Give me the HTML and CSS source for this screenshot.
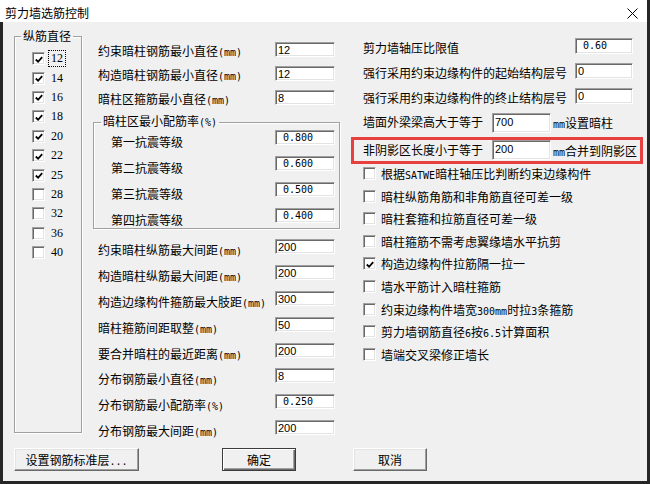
FILE: index.html
```html
<!DOCTYPE html>
<html lang="zh-CN">
<head>
    <meta charset="UTF-8" />
    <title>剪力墙选筋控制</title>
    <link rel="stylesheet" href="styles.css">
</head>
<body>

<div class="window">
    <div class="titlebar">
        <span class="title">剪力墙选筋控制</span>
        <span class="close">
            <svg width="11" height="11" viewBox="0 0 11 11"><path d="M0.5 0.5L10.5 10.5M10.5 0.5L0.5 10.5" stroke="#000" stroke-width="1" fill="none"/></svg>
        </span>
    </div>

    <div class="client">
        <div class="panels">

            <fieldset class="group bars">
                <legend>纵筋直径</legend>
                <div class="bar-list">
                    <div class="bar-row"><span class="box on"><svg width="11" height="11" viewBox="0 0 11 11"><path d="M2 5.5L4.5 8L9 3" stroke="#000" stroke-width="2" fill="none"/></svg></span><span class="dia focus">12</span></div>
                    <div class="bar-row"><span class="box on"><svg width="11" height="11" viewBox="0 0 11 11"><path d="M2 5.5L4.5 8L9 3" stroke="#000" stroke-width="2" fill="none"/></svg></span><span class="dia">14</span></div>
                    <div class="bar-row"><span class="box on"><svg width="11" height="11" viewBox="0 0 11 11"><path d="M2 5.5L4.5 8L9 3" stroke="#000" stroke-width="2" fill="none"/></svg></span><span class="dia">16</span></div>
                    <div class="bar-row"><span class="box on"><svg width="11" height="11" viewBox="0 0 11 11"><path d="M2 5.5L4.5 8L9 3" stroke="#000" stroke-width="2" fill="none"/></svg></span><span class="dia">18</span></div>
                    <div class="bar-row"><span class="box on"><svg width="11" height="11" viewBox="0 0 11 11"><path d="M2 5.5L4.5 8L9 3" stroke="#000" stroke-width="2" fill="none"/></svg></span><span class="dia">20</span></div>
                    <div class="bar-row"><span class="box on"><svg width="11" height="11" viewBox="0 0 11 11"><path d="M2 5.5L4.5 8L9 3" stroke="#000" stroke-width="2" fill="none"/></svg></span><span class="dia">22</span></div>
                    <div class="bar-row"><span class="box on"><svg width="11" height="11" viewBox="0 0 11 11"><path d="M2 5.5L4.5 8L9 3" stroke="#000" stroke-width="2" fill="none"/></svg></span><span class="dia">25</span></div>
                    <div class="bar-row"><span class="box"></span><span class="dia">28</span></div>
                    <div class="bar-row"><span class="box"></span><span class="dia">32</span></div>
                    <div class="bar-row"><span class="box"></span><span class="dia">36</span></div>
                    <div class="bar-row"><span class="box"></span><span class="dia">40</span></div>
                </div>
            </fieldset>

            <div class="col mid">
                <div class="field top"><label>约束暗柱钢筋最小直径<span class="n">(mm)</span></label><span class="edit">12</span></div>
                <div class="field top"><label>构造暗柱钢筋最小直径<span class="n">(mm)</span></label><span class="edit">12</span></div>
                <div class="field top"><label>暗柱区箍筋最小直径<span class="n">(mm)</span></label><span class="edit">8</span></div>

                <fieldset class="group ratio">
                    <legend>暗柱区最小配筋率<span class="n">(%)</span></legend>
                    <div class="ratio-list">
                        <div class="grade"><label>第一抗震等级</label><span class="edit dec">0.800</span></div>
                        <div class="grade"><label>第二抗震等级</label><span class="edit dec">0.600</span></div>
                        <div class="grade"><label>第三抗震等级</label><span class="edit dec">0.500</span></div>
                        <div class="grade"><label>第四抗震等级</label><span class="edit dec">0.400</span></div>
                    </div>
                </fieldset>

                <div class="lower">
                    <div class="field low"><label>约束暗柱纵筋最大间距<span class="n">(mm)</span></label><span class="edit">200</span></div>
                    <div class="field low"><label>构造暗柱纵筋最大间距<span class="n">(mm)</span></label><span class="edit">200</span></div>
                    <div class="field low"><label>构造边缘构件箍筋最大肢距<span class="n">(mm)</span></label><span class="edit">300</span></div>
                    <div class="field low"><label>暗柱箍筋间距取整<span class="n">(mm)</span></label><span class="edit">50</span></div>
                    <div class="field low"><label>要合并暗柱的最近距离<span class="n">(mm)</span></label><span class="edit">200</span></div>
                    <div class="field low"><label>分布钢筋最小直径<span class="n">(mm)</span></label><span class="edit">8</span></div>
                    <div class="field low"><label>分布钢筋最小配筋率<span class="n">(%)</span></label><span class="edit dec">0.250</span></div>
                    <div class="field low"><label>分布钢筋最大间距<span class="n">(mm)</span></label><span class="edit">200</span></div>
                </div>
            </div>

            <div class="col side">
                <div class="field wide"><label>剪力墙轴压比限值</label><span class="edit dec">0.60</span></div>
                <div class="field wide"><label>强行采用约束边缘构件的起始结构层号</label><span class="edit">0</span></div>
                <div class="field wide"><label>强行采用约束边缘构件的终止结构层号</label><span class="edit">0</span></div>
                <div class="field beam"><label>墙面外梁梁高大于等于</label><span class="edit tall">700</span><span class="unit"><span class="n">mm</span>设置暗柱</span></div>
                <div class="field alert"><label>非阴影区长度小于等于</label><span class="edit tall">200</span><span class="unit"><span class="n">mm</span>合并到阴影区</span></div>

                <div class="options">
                    <div class="opt"><span class="box"></span><span>根据<span class="n">SATWE</span>暗柱轴压比判断约束边缘构件</span></div>
                    <div class="opt"><span class="box"></span><span>暗柱纵筋角筋和非角筋直径可差一级</span></div>
                    <div class="opt"><span class="box"></span><span>暗柱套箍和拉筋直径可差一级</span></div>
                    <div class="opt"><span class="box"></span><span>暗柱箍筋不需考虑翼缘墙水平抗剪</span></div>
                    <div class="opt"><span class="box on"><svg width="11" height="11" viewBox="0 0 11 11"><path d="M2 5.5L4.5 8L9 3" stroke="#000" stroke-width="2" fill="none"/></svg></span><span>构造边缘构件拉筋隔一拉一</span></div>
                    <div class="opt"><span class="box"></span><span>墙水平筋计入暗柱箍筋</span></div>
                    <div class="opt"><span class="box"></span><span>约束边缘构件墙宽<span class="n">300mm</span>时拉<span class="n">3</span>条箍筋</span></div>
                    <div class="opt"><span class="box"></span><span>剪力墙钢筋直径<span class="n">6</span>按<span class="n">6.5</span>计算面积</span></div>
                    <div class="opt"><span class="box"></span><span>墙端交叉梁修正墙长</span></div>
                </div>
            </div>

        </div>

        <div class="buttons">
            <button class="btn std">设置钢筋标准层<span class="n">...</span></button>
            <button class="btn ok">确定</button>
            <button class="btn cancel">取消</button>
        </div>
    </div>
</div>

</body>
</html>
```

FILE: styles.css
```css
* {
    box-sizing: border-box;
}

body {
    margin: 0;
    background-color: #262626;
    font-family: "Noto Sans CJK SC", sans-serif;
    font-size: 12px;
    color: #000;
}

.window {
    width: 647px;
    height: 481px;
    background-color: #f0f0f0;
    display: flex;
    flex-direction: column;
}

/* title bar */
.titlebar {
    height: 22px;
    background-color: #fff;
    display: flex;
    justify-content: space-between;
    align-items: flex-start;
    padding: 0 9px 0 5px;
}

.title {
    margin-top: 5px;
    line-height: 15px;
}

.close {
    margin-top: 8px;
    display: flex;
}

.client {
    flex: 1;
    border-left: 3px solid #262626;
    display: flex;
    flex-direction: column;
}

.panels {
    display: flex;
    height: 426px;
}

/* group boxes */
.group {
    margin: 0;
    padding: 0;
    border: 1px solid #a0a0a0;
    box-shadow: inset 1px 1px 0 #fff, 1px 1px 0 #fff;
    min-width: 0;
}

.group legend {
    padding: 0 2px;
    line-height: 14px;
}

.n {
    font-family: "DejaVu Sans Mono", monospace;
    font-size: 10px;
}

/* bar diameters */
.bars {
    margin: 7px 0 0 11px;
    width: 68px;
    height: 404px;
}

.bars legend {
    margin-left: 6px;
}

.bar-list {
    padding: 6px 0 0 17px;
}

.bar-row {
    display: flex;
    align-items: center;
    gap: 5px;
    height: 19.4px;
}

.dia {
    font-family: "Liberation Serif", serif;
    font-size: 12px;
    line-height: 13px;
    padding: 0 1px;
}

.focus {
    outline: 1px dotted #000;
    outline-offset: 1px;
}

/* check boxes */
.box {
    width: 13px;
    height: 13px;
    flex: none;
    background-color: #fff;
    border: 1px solid;
    border-color: #a0a0a0 #fff #fff #a0a0a0;
    box-shadow: inset 1px 1px 0 #696969, inset -1px -1px 0 #e3e3e3;
    display: flex;
    align-items: center;
    justify-content: center;
}

.box svg {
    margin: 1px 0 0 1px;
}

/* edit fields */
.edit {
    flex: none;
    width: 60px;
    height: 15px;
    background-color: #fff;
    border: 1px solid;
    border-color: #a0a0a0 #fff #fff #a0a0a0;
    box-shadow: inset 1px 1px 0 #696969, inset -1px -1px 0 #e3e3e3;
    font-family: "Liberation Sans", sans-serif;
    font-size: 11px;
    line-height: 12px;
    padding: 1px 0 0 2px;
}

.edit.dec {
    font-family: "DejaVu Sans Mono", monospace;
    font-size: 10px;
    padding-left: 7px;
}

.field {
    display: flex;
    align-items: flex-start;
}

.field label {
    line-height: 15px;
    white-space: nowrap;
}

/* middle column */
.col {
    display: flex;
    flex-direction: column;
}

.mid {
    margin-left: 11px;
    width: 247px;
    padding-top: 20px;
}

.mid .field {
    padding-left: 5px;
}

.mid .field label {
    width: 177px;
}

.field.top {
    height: 24px;
}

.field.top label {
    margin-top: 1px;
}

.ratio {
    width: 247px;
    height: 115px;
}

.ratio legend {
    margin-left: 7px;
}

.ratio-list {
    display: flex;
    flex-direction: column;
    gap: 11px;
    padding-left: 17px;
}

.grade {
    display: flex;
    height: 15px;
}

.grade label {
    width: 164px;
    line-height: 15px;
    margin-top: 4px;
}

.lower {
    margin-top: 10px;
}

.field.low {
    height: 25.9px;
}

.field.low label {
    margin-top: 3px;
}

/* right column */
.side {
    margin-left: 11px;
    width: 292px;
    padding-top: 15px;
}

.field.wide {
    height: 25px;
    padding-left: 12px;
}

.field.wide label {
    width: 212px;
    margin-top: 3px;
}

.field.wide .edit {
    width: 58px;
    height: 16px;
    margin-top: 1px;
}

.field.beam {
    height: 25px;
    padding-left: 12px;
}

.field.beam .edit {
    margin-top: 1px;
}

.field.beam label,
.field.alert label {
    width: 129px;
    margin-top: 2px;
}

.edit.tall {
    width: 59px;
    height: 20px;
    padding-top: 2px;
}

.unit {
    margin: 3px 0 0 2px;
    line-height: 15px;
    white-space: nowrap;
}

.field.alert {
    height: 27px;
    border: 3px solid #e8403f;
    padding-left: 9px;
}

.options {
    margin-top: 3px;
    display: flex;
    flex-direction: column;
    gap: 9.6px;
}

.opt {
    display: flex;
    align-items: center;
    gap: 5px;
    height: 13px;
    padding-left: 12px;
    white-space: nowrap;
}

/* buttons */
.buttons {
    display: flex;
    padding-left: 11px;
}

.btn {
    height: 23px;
    padding: 0;
    font-family: "Noto Sans CJK SC", sans-serif;
    font-size: 12px;
    color: #000;
    background-color: #f0f0f0;
    border: 1px solid;
    border-color: #fff #696969 #696969 #fff;
    box-shadow: inset -1px -1px 0 #a0a0a0, inset 1px 1px 0 #e3e3e3;
}

.btn.std {
    width: 125px;
}

.btn.ok {
    width: 74px;
    margin-left: 83px;
    border-color: #3c3c3c;
    box-shadow: inset 1px 1px 0 #fff, inset -1px -1px 0 #696969, inset -2px -2px 0 #a0a0a0;
}

.btn.cancel {
    width: 74px;
    margin-left: 57px;
}
```
